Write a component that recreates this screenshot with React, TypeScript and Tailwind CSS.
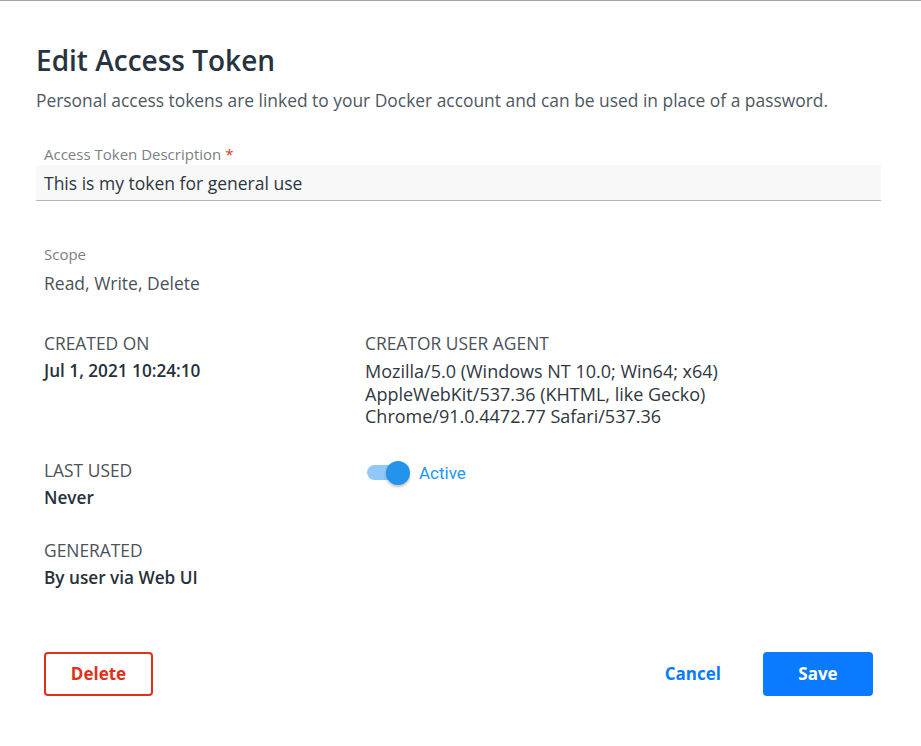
import React, { useState } from 'react';

const sans = { fontFamily: '"Open Sans", "Noto Sans", sans-serif' };

function Field({ label, children, strong = false }: { label: string; children: React.ReactNode; strong?: boolean }) {
  return (
    <div>
      <div className="text-[17.4px] leading-[24px] uppercase text-[#4b5258]">{label}</div>
      <div
        className={
          'mt-[4px] text-[17.2px] leading-[24px] ' + (strong ? 'font-semibold text-[#27313b]' : 'text-[#2f3841]')
        }
      >
        {children}
      </div>
    </div>
  );
}

function Toggle({ on, onChange }: { on: boolean; onChange: (v: boolean) => void }) {
  return (
    <button type="button" onClick={() => onChange(!on)} className="flex items-center gap-[9px] ml-[2px]">
      <span className="relative w-[43px] h-[24px] flex items-center">
        <span className={'w-[37px] h-[15px] rounded-full ' + (on ? 'bg-[#90c9f8]' : 'bg-[#c4c4c4]')} />
        <span
          className={
            'absolute top-0 w-[24px] h-[24px] rounded-full shadow-[0_2px_3px_rgba(0,0,0,0.25)] ' +
            (on ? 'right-0 bg-[#2393ec]' : 'left-0 bg-[#fafafa]')
          }
        />
      </span>
      <span className="text-[17px] leading-[24px] text-[#2196f3]" style={{ fontFamily: 'Roboto, "Liberation Sans", sans-serif' }}>
        {on ? 'Active' : 'Inactive'}
      </span>
    </button>
  );
}

export default function App() {
  const [desc, setDesc] = useState('This is my token for general use');
  const [active, setActive] = useState(true);

  return (
    <div className="w-full h-[746px] bg-white border-t border-[#a3a3a3] pl-[36px] pr-[40px] overflow-hidden" style={sans}>
      <h1 className="mt-[42px] text-[28px] leading-[34px] font-semibold text-[#27333e]">Edit Access Token</h1>
      <p className="mt-[11px] text-[17.4px] leading-[24px] text-[#4d5862]">
        Personal access tokens are linked to your Docker account and can be used in place of a password.
      </p>

      <label className="block mt-[32px]">
        <span className="block px-2 text-[15px] leading-[20px] text-[#7b8086]">
          Access Token Description <span className="text-[#e0341b]">*</span>
        </span>
        <input
          value={desc}
          onChange={(e) => setDesc(e.target.value)}
          className="mt-[1px] block w-full h-[36px] px-2 bg-[#f8f8f8] border-b border-[#b5b5b5] text-[17.5px] text-[#2d3741] outline-none"
          style={sans}
        />
      </label>

      <div className="px-2">
        <div className="mt-[43px] text-[15px] leading-[20px] text-[#7b8086]">Scope</div>
        <div className="mt-[7px] text-[17.5px] leading-[24px] text-[#4a5259]">Read, Write, Delete</div>

        <div className="mt-[36px] grid grid-cols-[321px_1fr] gap-y-[28px]">
          <div>
            <Field label="Created on" strong>
              Jul 1, 2021 10:24:10
            </Field>
          </div>
          <div className="pb-[2px]">
            <div className="text-[17.4px] leading-[24px] uppercase text-[#4b5258]">Creator user agent</div>
            <div className="mt-[5px] text-[18px] leading-[22.5px] text-[#2f3841]">
              Mozilla/5.0 (Windows NT 10.0; Win64; x64)
              <br />
              AppleWebKit/537.36 (KHTML, like Gecko)
              <br />
              Chrome/91.0.4472.77 Safari/537.36
            </div>
          </div>

          <Field label="Last used" strong>
            Never
          </Field>
          <div className="pt-[3px]">
            <Toggle on={active} onChange={setActive} />
          </div>

          <Field label="Generated" strong>
            By user via Web UI
          </Field>
          <div />
        </div>

        <div className="mt-[62px] flex items-center">
          <button className="w-[109px] h-[44px] rounded-[4px] border-2 border-[#e0301a] text-[#e0301a] text-[17px] font-bold">
            Delete
          </button>
          <div className="ml-auto flex items-center">
            <button className="px-[8px] h-[44px] text-[17px] font-bold text-[#0a7bff]">Cancel</button>
            <button className="ml-[34px] w-[110px] h-[44px] rounded-[4px] bg-[#0a7bff] text-white text-[17px] font-bold">
              Save
            </button>
          </div>
        </div>
      </div>
    </div>
  );
}
